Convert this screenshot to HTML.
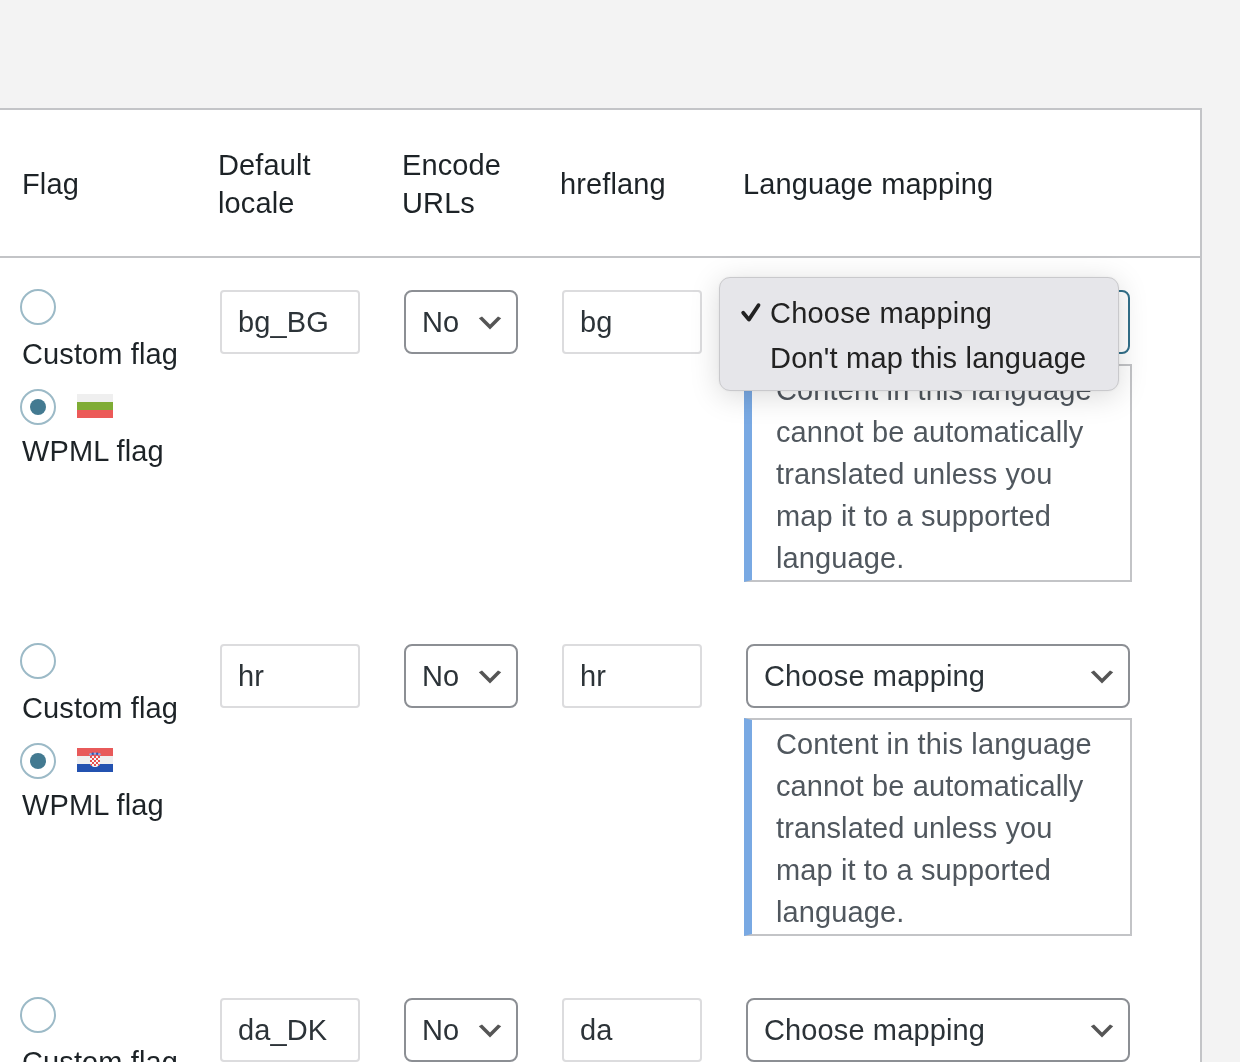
<!DOCTYPE html>
<html><head><meta charset="utf-8">
<style>
html,body{margin:0;padding:0;}
body{width:1240px;height:1062px;overflow:hidden;background:#f3f3f3;position:relative;font-family:"Liberation Sans",sans-serif;}
.t{position:absolute;white-space:nowrap;will-change:transform;font-size:29px;line-height:32px;letter-spacing:0.12px;}
.tbl{position:absolute;left:-10px;top:108px;width:1210px;height:1000px;background:#fff;border-top:2px solid #c3c4c7;border-right:2px solid #c3c4c7;}
.hline{position:absolute;left:0;top:256px;width:1200px;height:2px;background:#c3c4c7;}
.radio{position:absolute;width:32px;height:32px;border:2px solid #9cbac7;border-radius:50%;box-sizing:content-box;}
.dot{position:absolute;width:16px;height:16px;border-radius:50%;background:#437a91;}
.inp{position:absolute;height:60px;border:2px solid #dcdcde;border-radius:4px;box-sizing:content-box;}
.inp{box-sizing:border-box;height:64px;}
.sel{position:absolute;height:64px;box-sizing:border-box;border:2px solid #8c8f94;border-radius:8px;}
.sel.foc{border-color:#33708a;}
.chev{position:absolute;}
.notice{position:absolute;box-sizing:border-box;border:2px solid #c3c4c7;border-left:8px solid #79a9e3;background:#fff;}
.popup{position:absolute;left:719px;top:277px;width:400px;height:114px;box-sizing:border-box;background:#e6e6ea;border:1px solid #c9c9cc;border-radius:11px;box-shadow:0 5px 30px rgba(0,0,0,0.15),0 0 3px rgba(0,0,0,0.06);}
</style></head><body>
<div class="tbl"></div>
<div class="hline"></div>
<div class="t" style="left:22px;top:167.7px;color:#1d2327;">Flag</div>
<div class="t" style="left:218px;top:149.0px;color:#1d2327;">Default</div>
<div class="t" style="left:218px;top:186.8px;color:#1d2327;">locale</div>
<div class="t" style="left:402px;top:148.7px;color:#1d2327;">Encode</div>
<div class="t" style="left:402px;top:186.8px;color:#1d2327;">URLs</div>
<div class="t" style="left:560px;top:167.7px;color:#1d2327;">hreflang</div>
<div class="t" style="left:743px;top:167.7px;color:#1d2327;">Language mapping</div>
<div class="radio" style="left:20px;top:289px"></div>
<div class="t" style="left:22px;top:338.3px;color:#1d2327;">Custom flag</div>
<div class="radio" style="left:20px;top:389px"></div>
<div class="dot" style="left:30px;top:399px"></div>
<div style="position:absolute;left:77px;top:394px;width:36px;height:24px"><div style="height:8px;background:#efefef"></div><div style="height:8px;background:#7fac35"></div><div style="height:8px;background:#ec5a58"></div></div>
<div class="t" style="left:22px;top:434.6px;color:#1d2327;">WPML flag</div>
<div class="inp" style="left:220px;top:290px;width:140px"></div>
<div class="t" style="left:237.5px;top:306.0px;color:#2c3338;">bg_BG</div>
<div class="sel" style="left:404px;top:290px;width:114px"></div>
<div class="t" style="left:421.5px;top:306.0px;color:#2c3338;">No</div>
<svg class="chev" viewBox="0 0 20 20" width="32" height="32" style="left:474px;top:307.4px"><path d="M5 6l5 5 5-5 2 1-7 7-7-7 2-1z" fill="#555"/></svg>
<div class="inp" style="left:562px;top:290px;width:140px"></div>
<div class="t" style="left:579.5px;top:306.0px;color:#2c3338;">bg</div>
<div class="sel foc" style="left:746px;top:290px;width:384px"></div>
<div class="notice" style="left:744px;top:364px;width:388px;height:218px"></div>
<div class="t" style="left:776px;top:374.3px;color:#50575e;">Content in this language</div>
<div class="t" style="left:776px;top:416.3px;color:#50575e;">cannot be automatically</div>
<div class="t" style="left:776px;top:458.3px;color:#50575e;">translated unless you</div>
<div class="t" style="left:776px;top:500.3px;color:#50575e;">map it to a supported</div>
<div class="t" style="left:776px;top:542.3px;color:#50575e;">language.</div>
<div class="radio" style="left:20px;top:643px"></div>
<div class="t" style="left:22px;top:692.3px;color:#1d2327;">Custom flag</div>
<div class="radio" style="left:20px;top:743px"></div>
<div class="dot" style="left:30px;top:753px"></div>
<svg style="position:absolute;left:77px;top:748px" width="36" height="24" viewBox="0 0 36 24"><rect width="36" height="8" fill="#e85a5a"/><rect y="8" width="36" height="8" fill="#efefef"/><rect y="16" width="36" height="8" fill="#2352b0"/><defs><clipPath id="sh"><path d="M13 8h10v6.5c0 2.8-2.2 4.5-5 4.5s-5-1.7-5-4.5z"/></clipPath></defs><path d="M13 8h10v6.5c0 2.8-2.2 4.5-5 4.5s-5-1.7-5-4.5z" fill="#f4f6f6"/><g fill="#e85050" clip-path="url(#sh)"><rect x="13" y="8" width="2" height="2"/><rect x="17" y="8" width="2" height="2"/><rect x="21" y="8" width="2" height="2"/><rect x="15" y="10" width="2" height="2"/><rect x="19" y="10" width="2" height="2"/><rect x="13" y="12" width="2" height="2"/><rect x="17" y="12" width="2" height="2"/><rect x="21" y="12" width="2" height="2"/><rect x="15" y="14" width="2" height="2"/><rect x="19" y="14" width="2" height="2"/><rect x="13" y="16" width="2" height="2"/><rect x="17" y="16" width="2" height="2"/><rect x="21" y="16" width="2" height="2"/></g><g><circle cx="13.6" cy="6.2" r="1.2" fill="#86b2f0"/><circle cx="15.8" cy="5.8" r="1.2" fill="#2c59b8"/><circle cx="18" cy="5.6" r="1.2" fill="#86b2f0"/><circle cx="20.2" cy="5.8" r="1.2" fill="#2c59b8"/><circle cx="22.4" cy="6.2" r="1.2" fill="#86b2f0"/></g></svg>
<div class="t" style="left:22px;top:788.6px;color:#1d2327;">WPML flag</div>
<div class="inp" style="left:220px;top:644px;width:140px"></div>
<div class="t" style="left:237.5px;top:660.0px;color:#2c3338;">hr</div>
<div class="sel" style="left:404px;top:644px;width:114px"></div>
<div class="t" style="left:421.5px;top:660.0px;color:#2c3338;">No</div>
<svg class="chev" viewBox="0 0 20 20" width="32" height="32" style="left:474px;top:661.4px"><path d="M5 6l5 5 5-5 2 1-7 7-7-7 2-1z" fill="#555"/></svg>
<div class="inp" style="left:562px;top:644px;width:140px"></div>
<div class="t" style="left:579.5px;top:660.0px;color:#2c3338;">hr</div>
<div class="sel" style="left:746px;top:644px;width:384px"></div>
<div class="t" style="left:763.5px;top:660.0px;color:#2c3338;">Choose mapping</div>
<svg class="chev" viewBox="0 0 20 20" width="32" height="32" style="left:1086px;top:661.4px"><path d="M5 6l5 5 5-5 2 1-7 7-7-7 2-1z" fill="#555"/></svg>
<div class="notice" style="left:744px;top:718px;width:388px;height:218px"></div>
<div class="t" style="left:776px;top:728.3px;color:#50575e;">Content in this language</div>
<div class="t" style="left:776px;top:770.3px;color:#50575e;">cannot be automatically</div>
<div class="t" style="left:776px;top:812.3px;color:#50575e;">translated unless you</div>
<div class="t" style="left:776px;top:854.3px;color:#50575e;">map it to a supported</div>
<div class="t" style="left:776px;top:896.3px;color:#50575e;">language.</div>
<div class="radio" style="left:20px;top:997px"></div>
<div class="t" style="left:22px;top:1046.3px;color:#1d2327;">Custom flag</div>
<div class="inp" style="left:220px;top:998px;width:140px"></div>
<div class="t" style="left:237.5px;top:1014.0px;color:#2c3338;">da_DK</div>
<div class="sel" style="left:404px;top:998px;width:114px"></div>
<div class="t" style="left:421.5px;top:1014.0px;color:#2c3338;">No</div>
<svg class="chev" viewBox="0 0 20 20" width="32" height="32" style="left:474px;top:1015.4px"><path d="M5 6l5 5 5-5 2 1-7 7-7-7 2-1z" fill="#555"/></svg>
<div class="inp" style="left:562px;top:998px;width:140px"></div>
<div class="t" style="left:579.5px;top:1014.0px;color:#2c3338;">da</div>
<div class="sel" style="left:746px;top:998px;width:384px"></div>
<div class="t" style="left:763.5px;top:1014.0px;color:#2c3338;">Choose mapping</div>
<svg class="chev" viewBox="0 0 20 20" width="32" height="32" style="left:1086px;top:1015.4px"><path d="M5 6l5 5 5-5 2 1-7 7-7-7 2-1z" fill="#555"/></svg>
<div class="notice" style="left:744px;top:1072px;width:388px;height:218px"></div>
<div class="t" style="left:776px;top:1082.3px;color:#50575e;">Content in this language</div>
<div class="t" style="left:776px;top:1124.3px;color:#50575e;">cannot be automatically</div>
<div class="t" style="left:776px;top:1166.3px;color:#50575e;">translated unless you</div>
<div class="t" style="left:776px;top:1208.3px;color:#50575e;">map it to a supported</div>
<div class="t" style="left:776px;top:1250.3px;color:#50575e;">language.</div>
<div class="popup"></div>
<svg style="position:absolute;left:738px;top:300px" width="26" height="26" viewBox="0 0 26 26"><path d="M5.2 12.8L10.9 19.6L20.5 5.2" fill="none" stroke="#222" stroke-width="3.8" stroke-linecap="round" stroke-linejoin="round"/></svg>
<div class="t" style="left:770px;top:296.8px;color:#222;letter-spacing:0.2px">Choose mapping</div>
<div class="t" style="left:770px;top:342.0px;color:#222;letter-spacing:0.2px">Don't map this language</div>
</body></html>
